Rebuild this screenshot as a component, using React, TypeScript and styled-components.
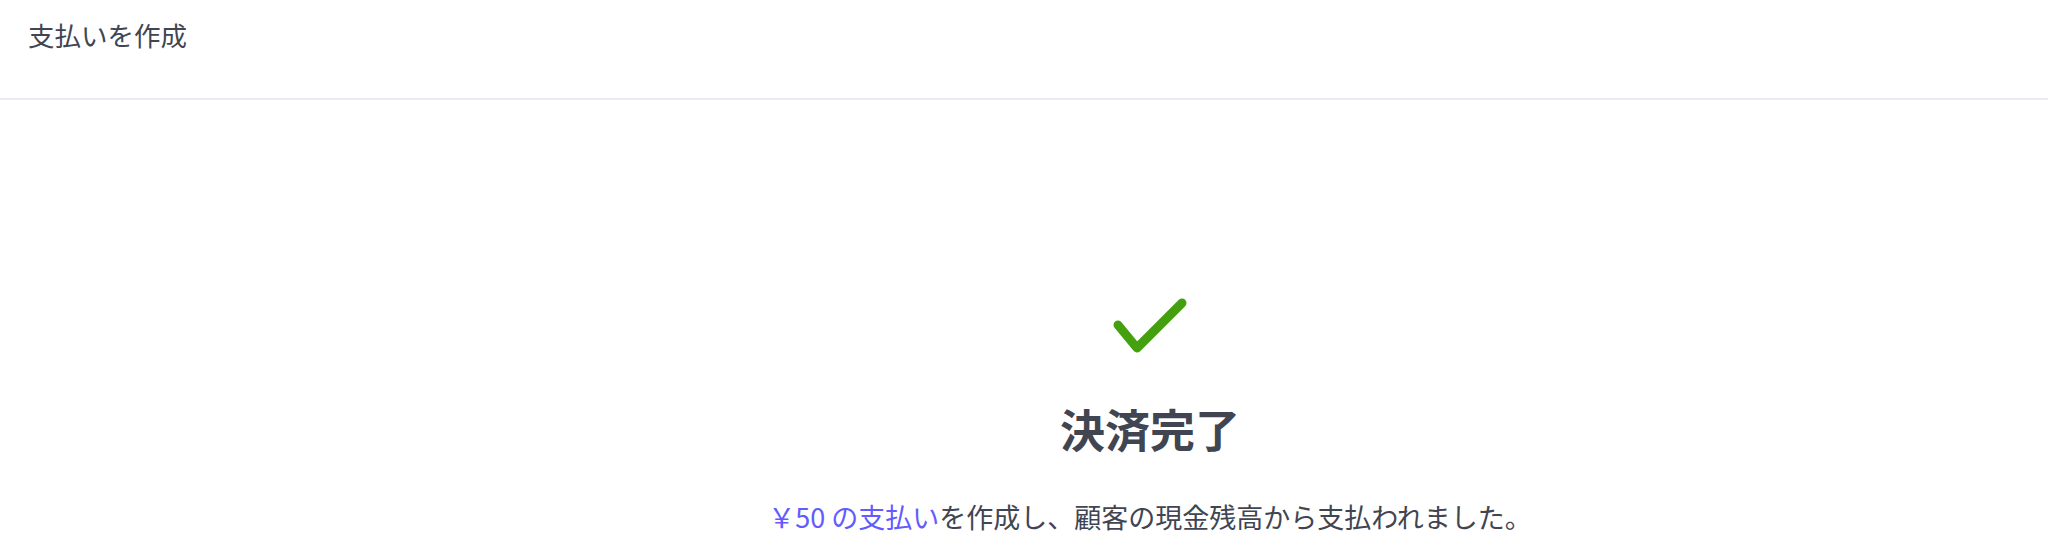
import React from "react";
import styled, { createGlobalStyle } from "styled-components";

const GlobalStyle = createGlobalStyle`
  body {
    margin: 0;
    background: #ffffff;
    font-family: "Noto Sans CJK JP", "Noto Sans", sans-serif;
    color: #414552;
  }
`;

function App() {
  return (
    <StyledPage>
      <GlobalStyle />
      <StyledHeader>
        <StyledHeaderTitle>支払いを作成</StyledHeaderTitle>
      </StyledHeader>
      <StyledBody>
        <StyledCheck viewBox="0 0 80 64" aria-hidden="true">
          <polyline
            points="8,29 27,52 72,7"
            fill="none"
            stroke="#44a00f"
            strokeWidth="9"
            strokeLinecap="round"
            strokeLinejoin="round"
          />
        </StyledCheck>
        <StyledTitle>決済完了</StyledTitle>
        <StyledMessage>
          <StyledLink href="#">￥50 の支払い</StyledLink>を作成し、顧客の現金残高から支払われました。
        </StyledMessage>
      </StyledBody>
    </StyledPage>
  );
}

export default App;

const StyledPage = styled.div`
  width: 2048px;
  height: 558px;
  overflow: hidden;
`;

const StyledHeader = styled.header`
  height: 100px;
  display: flex;
  align-items: flex-start;
  padding: 22px 0 0 28px;
  border-bottom: 2px solid #e8ebef;
  box-sizing: border-box;
`;

const StyledHeaderTitle = styled.h1`
  margin: 0;
  font-size: 26.5px;
  font-weight: 400;
  line-height: 1;
  color: #414552;
`;

const StyledBody = styled.main`
  display: flex;
  flex-direction: column;
  align-items: center;
  padding: 196px 0 0 252px;
`;

const StyledCheck = styled.svg`
  width: 80px;
  height: 64px;
  display: block;
`;

const StyledTitle = styled.h2`
  margin: 46px 0 0;
  font-size: 45px;
  font-weight: 700;
  line-height: 1;
  color: #414552;
`;

const StyledMessage = styled.p`
  margin: 52px 0 0;
  font-size: 27px;
  line-height: 1;
  color: #414552;
`;

const StyledLink = styled.a`
  color: #635bff;
  text-decoration: none;
`;
